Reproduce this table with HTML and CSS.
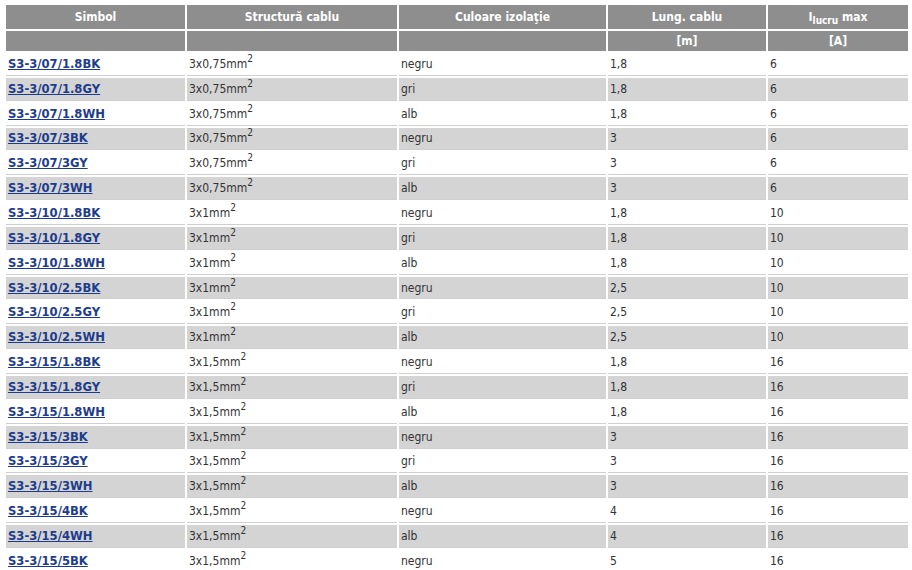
FILE: index.html
```html
<!DOCTYPE html>
<html>
<head>
<meta charset="utf-8">
<link rel="stylesheet" href="styles.css">
</head>
<body>
<div class="wrap">
<table class="cables">
<thead>
<tr class="h1">
<th class="c1">Simbol</th><th class="c2">Structură cablu</th><th class="c3">Culoare izolaţie</th><th class="c4">Lung. cablu</th><th class="c5">I<sub>lucru</sub> max</th>
</tr>
<tr class="h2">
<th></th><th></th><th></th><th>[m]</th><th>[A]</th>
</tr>
</thead>
<tbody>
<tr><td><a href="#">S3-3/07/1.8BK</a></td><td>3x0,75mm<sup>2</sup></td><td>negru</td><td>1,8</td><td>6</td></tr>
<tr class="alt"><td><a href="#">S3-3/07/1.8GY</a></td><td>3x0,75mm<sup>2</sup></td><td>gri</td><td>1,8</td><td>6</td></tr>
<tr><td><a href="#">S3-3/07/1.8WH</a></td><td>3x0,75mm<sup>2</sup></td><td>alb</td><td>1,8</td><td>6</td></tr>
<tr class="alt"><td><a href="#">S3-3/07/3BK</a></td><td>3x0,75mm<sup>2</sup></td><td>negru</td><td>3</td><td>6</td></tr>
<tr><td><a href="#">S3-3/07/3GY</a></td><td>3x0,75mm<sup>2</sup></td><td>gri</td><td>3</td><td>6</td></tr>
<tr class="alt"><td><a href="#">S3-3/07/3WH</a></td><td>3x0,75mm<sup>2</sup></td><td>alb</td><td>3</td><td>6</td></tr>
<tr><td><a href="#">S3-3/10/1.8BK</a></td><td>3x1mm<sup>2</sup></td><td>negru</td><td>1,8</td><td>10</td></tr>
<tr class="alt"><td><a href="#">S3-3/10/1.8GY</a></td><td>3x1mm<sup>2</sup></td><td>gri</td><td>1,8</td><td>10</td></tr>
<tr><td><a href="#">S3-3/10/1.8WH</a></td><td>3x1mm<sup>2</sup></td><td>alb</td><td>1,8</td><td>10</td></tr>
<tr class="alt"><td><a href="#">S3-3/10/2.5BK</a></td><td>3x1mm<sup>2</sup></td><td>negru</td><td>2,5</td><td>10</td></tr>
<tr><td><a href="#">S3-3/10/2.5GY</a></td><td>3x1mm<sup>2</sup></td><td>gri</td><td>2,5</td><td>10</td></tr>
<tr class="alt"><td><a href="#">S3-3/10/2.5WH</a></td><td>3x1mm<sup>2</sup></td><td>alb</td><td>2,5</td><td>10</td></tr>
<tr><td><a href="#">S3-3/15/1.8BK</a></td><td>3x1,5mm<sup>2</sup></td><td>negru</td><td>1,8</td><td>16</td></tr>
<tr class="alt"><td><a href="#">S3-3/15/1.8GY</a></td><td>3x1,5mm<sup>2</sup></td><td>gri</td><td>1,8</td><td>16</td></tr>
<tr><td><a href="#">S3-3/15/1.8WH</a></td><td>3x1,5mm<sup>2</sup></td><td>alb</td><td>1,8</td><td>16</td></tr>
<tr class="alt"><td><a href="#">S3-3/15/3BK</a></td><td>3x1,5mm<sup>2</sup></td><td>negru</td><td>3</td><td>16</td></tr>
<tr><td><a href="#">S3-3/15/3GY</a></td><td>3x1,5mm<sup>2</sup></td><td>gri</td><td>3</td><td>16</td></tr>
<tr class="alt"><td><a href="#">S3-3/15/3WH</a></td><td>3x1,5mm<sup>2</sup></td><td>alb</td><td>3</td><td>16</td></tr>
<tr><td><a href="#">S3-3/15/4BK</a></td><td>3x1,5mm<sup>2</sup></td><td>negru</td><td>4</td><td>16</td></tr>
<tr class="alt"><td><a href="#">S3-3/15/4WH</a></td><td>3x1,5mm<sup>2</sup></td><td>alb</td><td>4</td><td>16</td></tr>
<tr><td><a href="#">S3-3/15/5BK</a></td><td>3x1,5mm<sup>2</sup></td><td>negru</td><td>5</td><td>16</td></tr>
</tbody>
</table>
</div>
</body>
</html>
```
FILE: styles.css
```css
html, body {
  margin: 0;
  padding: 0;
  background: #ffffff;
}
.wrap {
  padding: 3px 2px 0 4px;
}
.cables {
  border-collapse: separate;
  border-spacing: 2px;
  table-layout: fixed;
  width: 906px;
  font-family: "DejaVu Sans Condensed", "DejaVu Sans", sans-serif;
  font-size: 12px;
  color: #333333;
}
.c1 { width: 179px; }
.c2 { width: 210px; }
.c3 { width: 207px; }
.c4 { width: 158px; }
.c5 { width: auto; }
.cables th {
  background: #8e8e8e;
  color: #ffffff;
  font-weight: bold;
  text-align: center;
  padding: 0;
  font-size: 12px;
}
.h1 th { height: 24px; }
.h2 th { height: 20px; }
.cables th sub {
  font-size: 10px;
  vertical-align: -3px;
  line-height: 0;
}
.cables td {
  height: 21.85px;
  padding: 0 2px;
  border-bottom: 1px solid #cfcfcf;
  text-align: left;
  vertical-align: middle;
  white-space: nowrap;
}
.cables tr.alt td {
  background: #d4d4d4;
}
.cables td a {
  color: #1d3c8c;
  font-family: "DejaVu Sans", sans-serif;
  font-size: 11.6px;
  font-weight: bold;
  text-decoration: underline;
}
.cables td sup {
  font-size: 10px;
  line-height: 0;
  vertical-align: 6px;
}
```
